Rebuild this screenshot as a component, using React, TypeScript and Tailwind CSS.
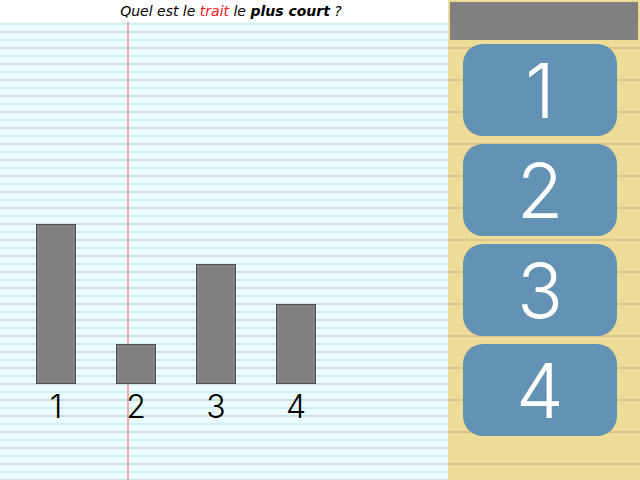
import React from "react";

const BARS = [
  { label: "1", h: "h-[160px]" },
  { label: "2", h: "h-[40px]" },
  { label: "3", h: "h-[120px]" },
  { label: "4", h: "h-[80px]" },
];

const CHOICES = ["1", "2", "3", "4"];

export default function App() {
  return (
    <div className="flex h-[480px] w-[640px] overflow-hidden font-['Inter',sans-serif]">
      {/* left: lined paper with the bars */}
      <div className="flex w-[448px] flex-col">
        <div className="flex h-[22px] items-center justify-center bg-white pl-[14px] font-['DejaVu_Sans',sans-serif] text-[14px] italic text-black">
          <span>
            Quel est le <span className="text-[#ff1a1a]">trait</span> le{" "}
            <span className="font-bold">plus court</span> ?
          </span>
        </div>
        <div className="relative flex flex-1 flex-col bg-[#ebfdfd] [background-image:repeating-linear-gradient(to_bottom,transparent_0px,transparent_1px,#d2eff3_1px,#d2eff3_3px,transparent_3px,transparent_9px,#cce0e0_9px,#cce0e0_11px,transparent_11px,transparent_16px)]">
          {/* margin line */}
          <div className="absolute inset-y-0 left-[127px] w-[1.5px] bg-[#f2a9a9]" />
          <div className="relative mt-[202px] flex gap-[40px] pl-[36px]">
            {BARS.map((b) => (
              <div key={b.label} className="flex w-[40px] flex-col items-center">
                <div className="flex h-[160px] w-full items-end">
                  <div className={`w-full border border-[#505050] bg-[#808080] ${b.h}`} />
                </div>
                <div className="mt-[5px] text-[32px] font-light leading-[36px] text-black">{b.label}</div>
              </div>
            ))}
          </div>
        </div>
      </div>

      {/* right: answer buttons */}
      <div className="flex w-[192px] flex-col bg-[#eedc99] [background-image:repeating-linear-gradient(to_bottom,transparent_0px,transparent_15px,#d8c68c_15px,#d8c68c_17px,transparent_17px,transparent_32px)]">
        <div className="mx-[2px] mt-[2px] h-[38px] bg-[#808080]" />
        <div className="mt-[4px] flex flex-col gap-[8px] pl-[15px]">
          {CHOICES.map((c) => (
            <button
              key={c}
              className="flex h-[92px] w-[154px] items-center justify-center rounded-[20px] bg-[#5389b7]/90 text-[76px] font-light leading-none text-white"
            >
              {c}
            </button>
          ))}
        </div>
      </div>
    </div>
  );
}
